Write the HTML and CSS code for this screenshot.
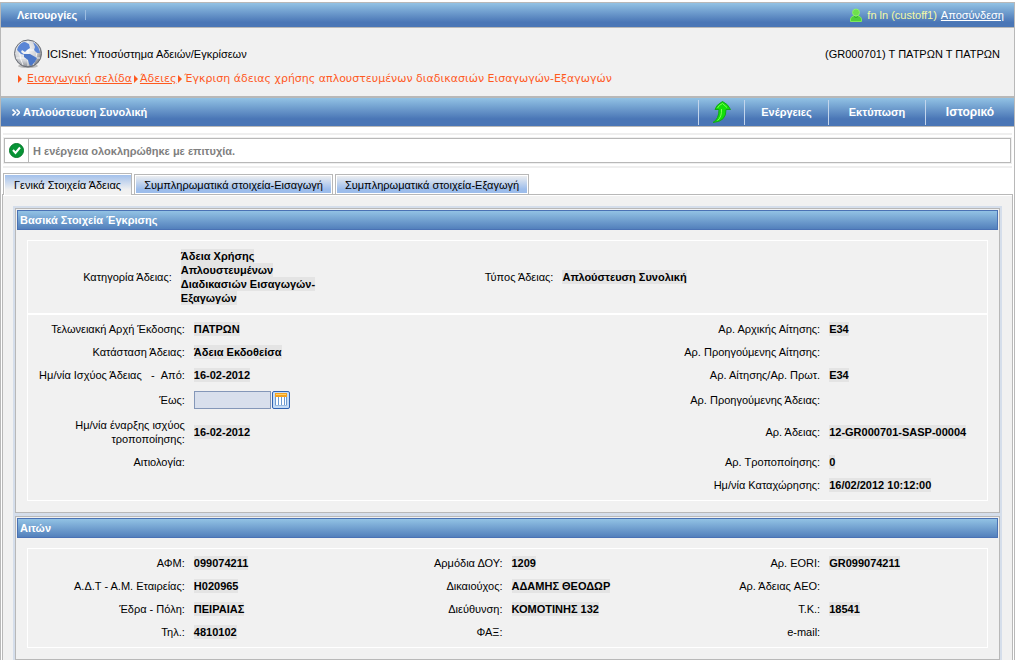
FILE: index.html
```html
<!DOCTYPE html>
<html lang="el">
<head>
<meta charset="utf-8">
<title>ICISnet: Υποσύστημα Αδειών/Εγκρίσεων</title>
<link rel="stylesheet" href="styles.css">
</head>
<body>
<div class="page">
  <nav class="topbar">
    <a class="menu" href="#">Λειτουργίες</a>
    <div class="user">
      <svg class="user-icon" viewBox="0 0 14 15" aria-hidden="true">
        <path d="M1.500 13.500V11Q2 8.500 4.500 8H9.500Q12 8.500 12.500 11V13.500Z" fill="#4fd03a" stroke="#7ee85e"/>
        <circle cx="7" cy="4.500" r="3.500" fill="#6ee04c" stroke="#8cf06c"/>
        <path d="M5 8.500Q7 10.500 9 8.500" fill="none" stroke="#2fae2a"/>
      </svg>
      <span class="user-name">fn ln (custoff1)</span>
      <a class="logout" href="#">Αποσύνδεση</a>
    </div>
  </nav>

  <header class="header">
    <div class="header-row">
      <svg class="globe" viewBox="0 0 30 30" aria-hidden="true">
        <defs>
          <radialGradient id="sea" cx="40%" cy="35%" r="65%"><stop offset="0" stop-color="#fff"/><stop offset=".65" stop-color="#d2d4d8"/><stop offset="1" stop-color="#85888e"/></radialGradient>
        </defs>
        <ellipse cx="15" cy="27" rx="10" ry="2" fill="#bbb"/>
        <circle cx="15" cy="14.500" r="13.500" fill="url(#sea)" stroke="#686c74"/>
        <path d="M3 11H27M3 19H27M15 2V27M9 3Q4 14 10 26M21 3Q27 14 20 26" fill="none" stroke="#fff" stroke-width=".8"/>
        <path d="M5 8Q8 3 12 3L16 5L17 9L14 11L12 13L9 11L8 13L12 16L8 15L4 11Z" fill="#5b86d6"/>
        <path d="M11 15L17 15L24 19L22 23L18 27L16 25L15 21L11 18Z" fill="#4d78c8"/>
        <path d="M20 3Q26 7 27 14L24 14L21 11L22 8Z" fill="#5b86d6"/>
      </svg>
      <h1 class="app-name">ICISnet: Υποσύστημα Αδειών/Εγκρίσεων</h1>
      <div class="office">(GR000701) Τ ΠΑΤΡΩΝ Τ ΠΑΤΡΩΝ</div>
    </div>
    <nav class="crumbs">
      <span class="arrow"></span><a class="home" href="#">Εισαγωγική σελίδα</a>
      <span class="arrow"></span><a href="#">Άδειες</a>
      <span class="arrow"></span><span>Έγκριση άδειας χρήσης απλουστευμένων διαδικασιών Εισαγωγών-Εξαγωγών</span>
    </nav>
  </header>

  <div class="titlebar">
    <svg class="chevrons" viewBox="0 0 8 7" aria-hidden="true"><path d="M.5 .5L3.500 3.500L.5 6.500M4.500 .5L7.500 3.500L4.500 6.500" fill="none" stroke="#fff" stroke-width="1.600"/></svg>
    <h2 class="title">Απλούστευση Συνολική</h2>
    <button class="action action-up" type="button" aria-label="Επιστροφή">
      <svg class="up-icon" viewBox="0 0 20 24" aria-hidden="true">
        <path d="M1 22.500Q7 19 7 9.500H3Q4 5 10.500 1.500Q16 4 18.500 9.500H14Q14.500 21.500 1 22.500Z" fill="#14e00a" stroke="#12a51a"/>
        <path d="M5.500 8Q7 5 10.500 3.500L15 7.500M9.500 9Q10 17 5.500 20.500" fill="none" stroke="#7bff55"/>
      </svg>
    </button>
    <button class="action action-menu" type="button">Ενέργειες</button>
    <button class="action action-print" type="button">Εκτύπωση</button>
    <button class="action action-history" type="button">Ιστορικό</button>
  </div>

  <div class="message-band">
    <div class="message" role="status">
      <div class="message-icon">
        <svg class="check" viewBox="0 0 15 15" aria-hidden="true"><circle cx="7.500" cy="7.500" r="7" fill="#079436" stroke="#067a2b"/><path d="M4 7L6.500 10L11 4.500" fill="none" stroke="#fff" stroke-width="2"/></svg>
      </div>
      <div class="message-text">Η ενέργεια ολοκληρώθηκε με επιτυχία.</div>
    </div>
  </div>

  <div class="tabs" role="tablist">
    <button class="tab tab-active" type="button" role="tab" aria-selected="true">Γενικά Στοιχεία Άδειας</button>
    <button class="tab" type="button" role="tab">Συμπληρωματικά στοιχεία-Εισαγωγή</button>
    <button class="tab" type="button" role="tab">Συμπληρωματικά στοιχεία-Εξαγωγή</button>
  </div>

  <main class="content">
    <div class="panels">
      <section class="panel">
        <h3 class="panel-title">Βασικά Στοιχεία Έγκρισης</h3>
        <div class="box">
          <dl class="kind">
            <dt>Κατηγορία Άδειας:</dt><dd><span class="value">Άδεια Χρήσης Απλουστευμένων Διαδικασιών Εισαγωγών-Εξαγωγών</span></dd>
            <dt>Τύπος Άδειας:</dt><dd><span class="value">Απλούστευση Συνολική</span></dd>
          </dl>
          <dl class="fields">
            <dt>Τελωνειακή Αρχή Έκδοσης:</dt><dd><span class="value">ΠΑΤΡΩΝ</span></dd>
            <dt class="last">Αρ. Αρχικής Αίτησης:</dt><dd><span class="value">E34</span></dd>
            <dt>Κατάσταση Άδειας:</dt><dd><span class="value">Άδεια Εκδοθείσα</span></dd>
            <dt class="last">Αρ. Προηγούμενης Αίτησης:</dt><dd></dd>
            <dt>Ημ/νία Ισχύος Άδειας &nbsp; - &nbsp;Από:</dt><dd><span class="value">16-02-2012</span></dd>
            <dt class="last">Αρ. Αίτησης/Αρ. Πρωτ.</dt><dd><span class="value">E34</span></dd>
            <dt><label for="until">Έως:</label></dt>
            <dd class="date">
              <input class="date-input" id="until" type="text">
              <button class="calendar" type="button" aria-label="Ημερολόγιο">
                <svg class="calendar-icon" viewBox="0 0 12 14" aria-hidden="true"><rect width="12" height="4" fill="#f4a11d"/><path d="M1 1.500H11" stroke="#ffd06c"/><rect y="4" width="12" height="9" fill="#fff"/><path d="M.5 4V13M3.500 4V13M6.500 4V13M9.500 4V13M11.500 4V13" stroke="#6d9bd0"/><path d="M0 12.500H12" stroke="#9bbce2"/></svg>
              </button>
            </dd>
            <dt class="last">Αρ. Προηγούμενης Άδειας:</dt><dd></dd>
            <dt>Ημ/νία έναρξης ισχύος τροποποίησης:</dt><dd><span class="value">16-02-2012</span></dd>
            <dt class="last">Αρ. Άδειας:</dt><dd><span class="value">12-GR000701-SASP-00004</span></dd>
            <dt>Αιτιολογία:</dt><dd></dd>
            <dt class="last">Αρ. Τροποποίησης:</dt><dd><span class="value">0</span></dd>
            <dt class="last">Ημ/νία Καταχώρησης:</dt><dd><span class="value">16/02/2012 10:12:00</span></dd>
          </dl>
        </div>
      </section>

      <section class="panel">
        <h3 class="panel-title">Αιτών</h3>
        <div class="box">
          <dl class="fields">
            <dt>ΑΦΜ:</dt><dd><span class="value">099074211</span></dd>
            <dt>Αρμόδια ΔΟΥ:</dt><dd><span class="value">1209</span></dd>
            <dt>Αρ. EORI:</dt><dd><span class="value">GR099074211</span></dd>
            <dt>Α.Δ.Τ - Α.Μ. Εταιρείας:</dt><dd><span class="value">H020965</span></dd>
            <dt>Δικαιούχος:</dt><dd><span class="value">ΑΔΑΜΗΣ ΘΕΟΔΩΡ</span></dd>
            <dt>Αρ. Άδειας AEO:</dt><dd></dd>
            <dt>Έδρα - Πόλη:</dt><dd><span class="value">ΠΕΙΡΑΙΑΣ</span></dd>
            <dt>Διεύθυνση:</dt><dd><span class="value">ΚΟΜΟΤΙΝΗΣ 132</span></dd>
            <dt>Τ.Κ.:</dt><dd><span class="value">18541</span></dd>
            <dt>Τηλ.:</dt><dd><span class="value">4810102</span></dd>
            <dt>ΦΑΞ:</dt><dd></dd>
            <dt>e-mail:</dt><dd></dd>
          </dl>
        </div>
      </section>
    </div>
  </main>
</div>
</body>
</html>
```

FILE: styles.css
```css
* { box-sizing: border-box; }

body {
  margin: 0;
  padding-top: 2px;
  background: #fff;
  color: #000;
  font-family: "Liberation Sans", Arial, sans-serif;
  font-size: 11px;
  line-height: 14px;
}

h1, h2, h3, dl, dd { margin: 0; }
h1, h2, h3 { font-size: 11px; }
button { font: inherit; color: inherit; margin: 0; cursor: pointer; }
svg { display: block; }

.page {
  border: 1px solid #b8b8b8;
  border-bottom: 0;
}

/* Top menu */
.topbar {
  display: flex;
  align-items: center;
  justify-content: space-between;
  height: 25px;
  padding: 0 10px 0 16px;
  background: linear-gradient(#92c2e4, #4a76b6 80%);
  border-bottom: 1px solid #b8b8b8;
}
.menu {
  padding-right: 8px;
  border-right: 1px solid #9dbde0;
  line-height: 10px;
  color: #fff;
  font-weight: bold;
  text-decoration: none;
}
.user { display: flex; align-items: center; gap: 4px; }
.user-icon { width: 14px; height: 15px; }
.user-name { color: #f5f9a5; }
.logout { color: #fff; }

/* Application header */
.header {
  height: 68px;
  padding: 11px 14px 0 12px;
  background: #f1f1f1;
}
.header-row { display: flex; align-items: center; gap: 4px; }
.globe { width: 30px; height: 30px; }
.app-name { flex: 1; font-weight: normal; }
.crumbs {
  display: flex;
  align-items: center;
  gap: 2px;
  padding: 3px 0 0 5px;
  color: #ff5a1f;
  font-family: "DejaVu Sans", Verdana, sans-serif;
  white-space: nowrap;
}
.crumbs a { color: inherit; }
.crumbs .home { margin-left: 3px; }
.arrow {
  border: 4px solid transparent;
  border-left-color: #ff5a1f;
  border-right: 0;
}

/* Title bar */
.titlebar {
  display: flex;
  align-items: center;
  height: 31px;
  padding-left: 11px;
  border-top: 2px solid #b8b8b8;
  border-bottom: 1px solid #b8b8b8;
  background: linear-gradient(#92c2e4, #4a76b6 75%);
  color: #fff;
}
.chevrons { width: 8px; height: 7px; margin-right: 3px; }
.title { flex: 1; }
.action {
  height: 25px;
  padding: 0;
  border: 0;
  border-left: 1px solid #c3d5ec;
  background: none;
  font-weight: bold;
}
.action-up {
  display: flex;
  align-items: center;
  justify-content: center;
  width: 46px;
}
.action-menu { width: 84px; }
.action-print { width: 97px; }
.action-history { width: 89px; font-size: 12px; }
.up-icon { width: 20px; height: 24px; }

/* Status message */
.message-band {
  margin: 6px 2px 0;
  padding: 2px 0;
  border: solid #efefef;
  border-width: 2px 0;
}
.message {
  display: flex;
  margin: 1px;
  border: 1px solid #b8b8b8;
  outline: 1px solid #efefef;
}
.message-icon {
  display: flex;
  align-items: center;
  justify-content: center;
  width: 24px;
  border-right: 1px solid #b8b8b8;
}
.check { width: 15px; height: 15px; }
.message-text { padding: 5px 4px 4px; color: #808080; font-weight: bold; }

/* Tabs */
.tabs {
  display: flex;
  align-items: flex-end;
  gap: 2px;
  padding: 5px 0 0 2px;
}
.tab {
  height: 20px;
  padding: 0 9px;
  border: 1px solid #b8b8b8;
  border-bottom: 0;
  background: linear-gradient(#f1f1f1, #9dbdeb 75%);
  box-shadow: inset 0 0 0 1px #fff;
  white-space: nowrap;
}
.tab-active {
  position: relative;
  height: 22px;
  margin-bottom: -1px;
  padding: 0 10px;
  background: linear-gradient(#9dbdeb, #f1f1f1 75%);
  box-shadow: inset 1px 1px #fff;
}

/* Content */
.content {
  margin: 0 1px;
  padding: 11px 10px 0;
  border: 1px solid #b8b8b8;
  border-bottom: 0;
  background: #f1f1f1;
  box-shadow: inset 0 1px #fff;
}
.panels {
  display: grid;
  gap: 3px;
  padding: 2px 2px 0;
  background: #d5deeb;
}
.panel {
  padding: 1px 1px 11px;
  border: 1px solid #b8b8b8;
  background: #f1f1f1;
}
.panel-title {
  height: 20px;
  padding: 2px;
  border: 1px solid #4a72b4;
  background: linear-gradient(#92c2e4, #5380bc);
  color: #fff;
}
.box { margin: 10px 10px 0; border: 1px solid #fff; }

.kind, .fields {
  display: grid;
  align-items: center;
}
.kind {
  grid-template-columns: 149fr 161fr 221fr 429fr;
  padding: 4px 0;
  border-bottom: 2px solid #fff;
}
.fields {
  grid-template-columns: 162fr 156fr 162fr 156fr 162fr 162fr;
  row-gap: 1px;
  padding: 3px 0 4px;
}
dt { padding: 4px 5px 4px 0; text-align: right; }
dd { padding: 4px 0 4px 4px; }
.last { grid-column: 5; }
.value { padding: 1px 0; background: #e4e4e4; font-weight: bold; }

.date { display: flex; gap: 1px; }
.date-input {
  width: 77px;
  height: 18px;
  padding: 0 2px;
  border: 1px solid #8497b8;
  background: #d8dfec;
  font: inherit;
}
.calendar {
  display: flex;
  align-items: center;
  justify-content: center;
  width: 18px;
  height: 18px;
  padding: 0;
  border: 1px solid #2f62b0;
  border-radius: 2px;
  background: #c5dcf6;
}
.calendar-icon { width: 12px; height: 14px; }
```
